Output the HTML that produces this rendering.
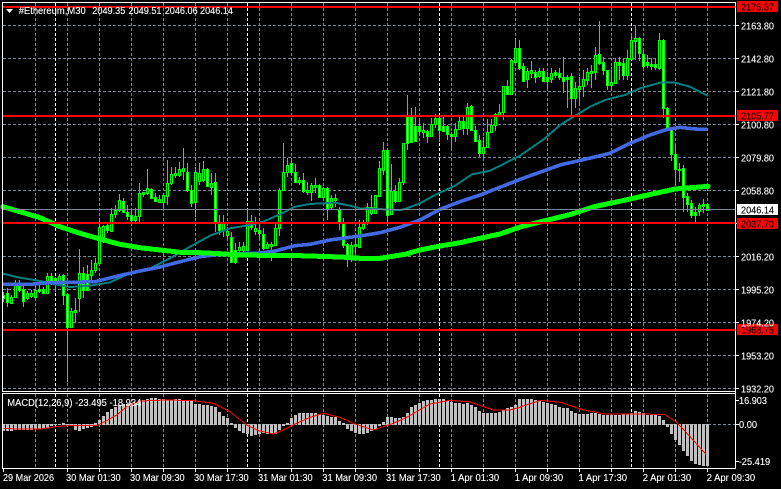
<!DOCTYPE html>
<html><head><meta charset="utf-8"><style>
html,body{margin:0;padding:0;background:#000;width:781px;height:489px;overflow:hidden}
svg{display:block;position:absolute;left:0;top:0}
text{font-family:"Liberation Sans",sans-serif;font-size:10.5px;fill:#fff;stroke:#fff;stroke-width:.12px}
.k{fill:#000;stroke:#000}
</style></head><body>
<svg id="s" xmlns="http://www.w3.org/2000/svg" width="781" height="489" viewBox="0 0 781 489">
<rect width="781" height="489" fill="#000"/>
<g id="grid" shape-rendering="crispEdges"></g>
<g id="hist" shape-rendering="crispEdges"></g>
<g id="cand" shape-rendering="crispEdges"></g>
<g id="ma" fill="none" shape-rendering="crispEdges" stroke-linejoin="round"></g>
<g shape-rendering="crispEdges">
<rect x="3" y="209" width="732" height="1" fill="#778899"/>
<rect x="3" y="6" width="732" height="2" fill="#f00"/>
<rect x="3" y="115" width="732" height="2" fill="#f00"/>
<rect x="3" y="222" width="732" height="2" fill="#f00"/>
<rect x="3" y="329" width="732" height="2" fill="#f00"/>
<rect x="2" y="2" width="734" height="1" fill="#fff"/>
<rect x="2" y="2" width="1" height="389" fill="#fff"/>
<rect x="735" y="2" width="1" height="467" fill="#fff"/>
<rect x="2" y="391" width="734" height="1" fill="#fff"/>
<rect x="2" y="393" width="734" height="1" fill="#fff"/>
<rect x="2" y="393" width="1" height="76" fill="#fff"/>
<rect x="2" y="468" width="734" height="1" fill="#fff"/>
<rect x="737" y="1" width="41" height="11" fill="#f00"/>
<rect x="737" y="110" width="41" height="11" fill="#f00"/>
<rect x="737" y="204" width="41" height="11" fill="#fff"/>
<rect x="737" y="218" width="41" height="11" fill="#f00"/>
<rect x="737" y="324" width="41" height="11" fill="#f00"/>
</g>
<polygon points="6,9 13,9 9.5,13" fill="#fff"/>
<text x="18.7" y="14" textLength="67" lengthAdjust="spacingAndGlyphs">#Ethereum,M30</text>
<text x="92.3" y="14" textLength="33" lengthAdjust="spacingAndGlyphs">2049.35</text>
<text x="128.5" y="14" textLength="33" lengthAdjust="spacingAndGlyphs">2049.51</text>
<text x="164.7" y="14" textLength="33" lengthAdjust="spacingAndGlyphs">2046.06</text>
<text x="200" y="14" textLength="33" lengthAdjust="spacingAndGlyphs">2046.14</text>
<text x="7.3" y="406" textLength="134" lengthAdjust="spacingAndGlyphs">MACD(12,26,9) -23.495 -18.934</text>
<g>
<text x="741" y="29.5" textLength="33" lengthAdjust="spacingAndGlyphs">2163.80</text>
<text x="741" y="62.5" textLength="33" lengthAdjust="spacingAndGlyphs">2142.80</text>
<text x="741" y="95.5" textLength="33" lengthAdjust="spacingAndGlyphs">2121.80</text>
<text x="741" y="128.5" textLength="33" lengthAdjust="spacingAndGlyphs">2100.80</text>
<text x="741" y="161.5" textLength="33" lengthAdjust="spacingAndGlyphs">2079.80</text>
<text x="741" y="194.5" textLength="33" lengthAdjust="spacingAndGlyphs">2058.80</text>
<text x="741" y="260.5" textLength="33" lengthAdjust="spacingAndGlyphs">2016.20</text>
<text x="741" y="293.5" textLength="33" lengthAdjust="spacingAndGlyphs">1995.20</text>
<text x="741" y="326.5" textLength="33" lengthAdjust="spacingAndGlyphs">1974.20</text>
<text x="741" y="359.5" textLength="33" lengthAdjust="spacingAndGlyphs">1953.20</text>
<text x="741" y="392.5" textLength="33" lengthAdjust="spacingAndGlyphs">1932.20</text>
<text class="k" x="741" y="10.5" textLength="33" lengthAdjust="spacingAndGlyphs">2175.37</text>
<text class="k" x="741" y="119.5" textLength="33" lengthAdjust="spacingAndGlyphs">2105.77</text>
<text class="k" x="741" y="213.5" textLength="33" lengthAdjust="spacingAndGlyphs">2046.14</text>
<text class="k" x="741" y="227.5" textLength="33" lengthAdjust="spacingAndGlyphs">2037.70</text>
<text class="k" x="741" y="333.5" textLength="33" lengthAdjust="spacingAndGlyphs">1968.75</text>
<text x="739" y="404" textLength="28" lengthAdjust="spacingAndGlyphs">16.903</text>
<text x="739" y="428" textLength="18" lengthAdjust="spacingAndGlyphs">0.00</text>
<text x="738.7" y="465" textLength="31.5" lengthAdjust="spacingAndGlyphs">-25.419</text>
<text x="3" y="481" textLength="51" lengthAdjust="spacingAndGlyphs">29 Mar 2026</text>
<text x="66" y="481" textLength="54.7" lengthAdjust="spacingAndGlyphs">30 Mar 01:30</text>
<text x="130" y="481" textLength="54.7" lengthAdjust="spacingAndGlyphs">30 Mar 09:30</text>
<text x="194" y="481" textLength="54.7" lengthAdjust="spacingAndGlyphs">30 Mar 17:30</text>
<text x="258" y="481" textLength="54.7" lengthAdjust="spacingAndGlyphs">31 Mar 01:30</text>
<text x="322.3" y="481" textLength="54.7" lengthAdjust="spacingAndGlyphs">31 Mar 09:30</text>
<text x="386" y="481" textLength="54.7" lengthAdjust="spacingAndGlyphs">31 Mar 17:30</text>
<text x="450.7" y="481" textLength="48.5" lengthAdjust="spacingAndGlyphs">1 Apr 01:30</text>
<text x="514.7" y="481" textLength="48.5" lengthAdjust="spacingAndGlyphs">1 Apr 09:30</text>
<text x="578.5" y="481" textLength="48.5" lengthAdjust="spacingAndGlyphs">1 Apr 17:30</text>
<text x="642.7" y="481" textLength="48.5" lengthAdjust="spacingAndGlyphs">2 Apr 01:30</text>
<text x="706.7" y="481" textLength="48.5" lengthAdjust="spacingAndGlyphs">2 Apr 09:30</text>
</g>
</svg>
<script>
(function(){
var NS="http://www.w3.org/2000/svg";
function rect(p,x,y,w,h,c){var r=document.createElementNS(NS,"rect");r.setAttribute("x",x);r.setAttribute("y",y);r.setAttribute("width",w);r.setAttribute("height",h);r.setAttribute("fill",c);p.appendChild(r);}
function line(p,x1,y1,x2,y2,c,d){var l=document.createElementNS(NS,"line");l.setAttribute("x1",x1);l.setAttribute("y1",y1);l.setAttribute("x2",x2);l.setAttribute("y2",y2);l.setAttribute("stroke",c);l.setAttribute("stroke-width",1);if(d)l.setAttribute("stroke-dasharray",d);p.appendChild(l);}
var g=document.getElementById("grid"),i;
var ys=[25,58,91,124,157,190,223,256,289,322,355,388];
for(i=0;i<ys.length;i++){line(g,3,ys[i]+.5,735,ys[i]+.5,"#778899","3 2");rect(g,736,ys[i],3,1,"#fff");}
line(g,3,424.5,735,424.5,"#778899","3 2");rect(g,736,424,3,1,"#fff");rect(g,736,400,3,1,"#fff");rect(g,736,461,3,1,"#fff");
for(var x=35;x<=707;x+=32){line(g,x+.5,3,x+.5,391,"#778899","3 2");line(g,x+.5,394,x+.5,468,"#778899","3 2");if(x>=67)rect(g,x,469,1,3,"#fff");}
rect(g,3,469,1,3,"#fff");
[55,247,439,631].forEach(function(x){line(g,x+.5,3,x+.5,391,"#fff","3 2");line(g,x+.5,394,x+.5,468,"#fff","3 2");});

/* t,b,h,l,fill(1 white) in 3x units */
var c4=[[390,400,380,410,1],[385,410,370,425,1],[397,413,390,418,0],[360,397,345,400,0],[362,375,345,380,1],[373,407,360,425,1],[385,400,378,405,0],[385,392,375,400,0],[375,397,360,398,0],[373,378,360,385,1],[373,383,365,388,1],[333,383,323,385,0],[333,350,325,360,1],[340,350,335,380,1],[333,347,328,360,0],[330,390,328,420,1],[388,485,385,651,1],[438,485,430,490,0],[435,442,400,475,0],[323,400,253,440,0],[325,375,305,400,1],[327,375,300,378,1],[315,330,285,355,0],[295,315,280,325,0],[185,295,160,300,0],[183,215,180,235,0],[180,195,170,205,1],[147,197,130,200,0],[135,147,120,160,0],[105,135,88,140,0],[107,140,100,145,1],[140,152,120,165,1],[150,165,128,170,1],[153,165,130,170,0],[85,152,55,170,0],[82,87,80,95,0],[70,83,12,90,0],[72,98,70,100,1],[97,107,85,112,1],[102,110,90,115,0],[90,110,85,130,0],[53,93,-15,120,0],[27,55,5,60,0],[25,30,5,40,0],[12,30,-9,35,0],[10,17,-51,45,0],[20,75,-6,80,1],[75,113,60,125,1],[20,110,5,155,0],[25,47,-6,60,0],[12,45,-12,50,0],[12,62,10,65,1],[55,65,25,90,0],[52,170,25,200,1],[170,195,150,210,1],[175,195,150,215,0],[197,210,185,225,0],[215,290,200,295,1],[255,290,235,298,1],[245,255,232,268,0],[243,255,232,260,0],[167,255,135,258,0],[167,185,150,195,1],[190,197,155,210,0],[195,205,170,225,1]];
var c5=[[207,248,190,255,1],[238,248,230,250,0],[238,242,232,287,0],[190,240,178,242,0],[75,190,70,213,0],[20,75,-65,78,0],[0,20,-22,35,0],[-5,22,-15,30,1],[22,50,-3,55,1],[46,50,35,60,0],[45,78,25,85,1],[75,82,50,90,0],[60,82,55,108,0],[60,65,40,85,0],[60,95,58,98,1],[70,95,65,98,0],[70,130,65,165,1],[100,125,90,135,0],[100,106,88,125,0],[135,175,125,195,1],[175,240,160,250,1],[238,272,235,305,1],[240,275,230,290,0],[238,243,215,265,0],[187,247,165,250,0],[178,188,165,195,0],[125,172,115,180,0],[125,145,90,150,0],[90,143,90,145,0],[10,92,-12,95,0],[-45,15,-68,30,0],[-45,150,-45,170,1],[78,148,-3,150,0],[78,108,60,115,1],[50,108,40,110,0],[-65,52,-65,60,0]];
var c2=[[350,430,285,450,1],[350,425,323,428,1],[378,422,320,425,1],[378,392,360,405,1],[390,397,370,415,0],[393,407,390,430,1],[372,407,355,410,0],[354,372,343,385,0],[354,390,350,425,1],[378,392,350,395,1],[378,403,375,420,1],[402,408,395,445,1],[387,407,370,425,0],[363,388,350,388,0],[363,383,345,405,1],[322,383,310,405,0],[318,390,315,393,1],[390,423,378,427,1],[420,458,405,472,1],[441,458,410,470,0],[397,442,357,445,0],[375,397,357,400,0],[343,375,340,392,0],[337,345,313,345,0],[258,337,258,360,0],[258,283,240,285,1],[180,283,178,285,0],[145,185,115,185,0],[145,205,120,210,1]];
var c3=[[198,242,190,245,1],[212,238,205,265,0],[210,218,183,235,0],[215,230,210,250,1],[212,228,205,235,0],[212,242,205,245,1],[232,242,215,265,1],[220,237,205,250,0],[216,225,210,235,1],[220,230,205,240,1],[230,242,172,280,1],[232,238,225,325,1],[228,295,220,345,1],[265,295,245,325,0],[258,268,230,315,0],[238,258,210,290,0],[215,240,205,255,0],[213,220,195,265,0],[165,215,140,240,0],[162,190,63,195,1],[187,210,170,225,1],[210,255,210,270,1],[247,255,200,270,0],[187,248,175,250,0],[187,195,170,240,1],[190,225,175,240,1],[175,225,150,240,0],[120,178,100,180,0],[115,122,75,180,0],[115,160,110,183,1],[163,198,150,205,1],[185,195,165,205,1],[193,197,175,210,1],[193,202,175,210,1],[120,205,100,210,0],[120,325,118,355,1],[325,380,320,385,1],[385,463,380,483,1],[462,507,435,555,1],[507,510,489,546,1],[504,591,495,636,1],[588,612,579,636,1],[609,645,600,654,1],[636,645,621,666,1],[615,633,609,648,0],[612,618,597,639,1],[612,630,609,633,1]];
var G="#00ff00",ca=document.getElementById("cand"),n=0;
function seg(base,list){list.forEach(function(d){
 var x=3+4*n,t=Math.round(base+d[0]/3),b=Math.round(base+d[1]/3),h=Math.round(base+d[2]/3),l=Math.round(base+d[3]/3);
 rect(ca,x,h,1,Math.max(l-h,1),G);
 if(b<=t)b=t+1;
 rect(ca,x-1,t,3,b-t+1,G);
 if(b-t>=2)rect(ca,x,t+1,1,b-t-1,d[4]?"#fff":"#000");
 n++;});}
seg(165,c4);seg(165,c5);seg(0,c2);seg(0,c3);

var m=[300,300,300,297,297,297,297,297,295,295,293,290,285,282,281,279,282,285,297,300,295,290,287,280,270,258,247,236,230,225,222,222,220,218,213,210,207,204,204,207,208,210,210,208,208,210,210,213,222,222,225,225,228,232,245,257,265,278,290,300,305,310,315,312,310,307,
310,310,310,298,285,280,265,255,250,250,250,250,250,252,255,258,260,262,272,280,295,300,305,310,310,305,300,295,285,276,262,262,265,265,262,250,232,225,218,212,210,210,208,206,208,212,217,218,218,222,218,225,232,242,248,248,250,250,245,240,235,232,225,208,
207,207,207,210,213,216,218,222,226,230,233,235,242,250,252,252,252,248,250,252,255,255,255,255,255,253,252,250,243,245,250,255,255,256,258,270,288,310,328,342,360,375,390,398,402,404,405];
var hi=document.getElementById("hist");
m.forEach(function(z,k){var x=2+4*k,y=Math.round(330+z/3),z0=424;
 if(y<z0)rect(hi,x,y,3,z0-y+1,"#c0c0c0");else if(y>z0)rect(hi,x,z0,3,y-z0+1,"#c0c0c0");else rect(hi,x,z0,3,1,"#c0c0c0");});

function pl(pts,c,w,cap){var e=document.createElementNS(NS,"polyline");e.setAttribute("points",pts.map(function(p){return p[0]+","+p[1];}).join(" "));e.setAttribute("stroke",c);e.setAttribute("stroke-width",w);if(cap)e.setAttribute("stroke-linecap","round");document.getElementById("ma").appendChild(e);}
pl([[3,273.7],[20,277.7],[40,281],[55,284.3],[70,287],[90,285.7],[110,282.3],[130,273.3],[150,268.3],[170,258.3],[190,246.7],[210,235.7],[230,228.3],[250,225],[263,221.7],[280,214.3],[295,206.7],[310,204],[335,202.7],[350,205.7],[360,208.3],[400,210],[405,209],[420,203.3],[435,195],[455,185.7],[472,174.3],[490,170.7],[503,164.3],[521,155],[545,138.3],[560,125],[590,106.7],[605,100],[625,95],[640,88.3],[660,82.7],[675,82.7],[690,86.7],[708,96]],"#008080",2);
pl([[3,284.3],[30,284.3],[50,282.7],[70,282.3],[95,281.7],[115,276.7],[140,271],[160,267],[180,261.7],[200,256.7],[220,254.3],[260,253],[275,251],[295,245.7],[310,244.3],[330,240],[350,237.3],[360,236],[380,232.7],[400,227.3],[420,220],[440,209.3],[460,201.7],[480,195],[500,187.3],[521,179],[561,164.7],[585,159.3],[610,153.3],[630,143.3],[650,135],[665,130],[680,127.3],[695,129],[707,129.3]],"#4169e1",3.6);
pl([[3,206.7],[20,211.7],[40,217.7],[60,226.7],[80,233.3],[100,239],[120,244.3],[140,247.7],[160,250],[180,252.3],[200,252.7],[220,253.7],[240,255],[260,255.3],[300,255.7],[340,257],[360,258.3],[380,258.3],[390,256.7],[405,254.3],[420,250],[440,246],[460,242.7],[480,238.3],[500,234],[521,226.7],[541,221.7],[571,214.3],[594,206.7],[621,201],[651,194.3],[675,189],[691,187.7],[708,186.3]],"#00ff00",5,true);
var r=[];
[[10,296],[120,297],[170,290],[200,287],[290,287],[320,272],[350,255],[380,230],[420,213],[500,210],[580,212],[640,220],[690,245],[740,285],[778,303]].forEach(function(p){r.push([p[0]/3,330+p[1]/3]);});
[[10,305],[40,312],[70,300],[110,280],[150,262],[190,250],[240,262],[280,280],[340,300],[400,280],[440,262],[510,222],[570,211],[630,216],[700,240],[750,240],[780,232]].forEach(function(p){r.push([260+p[0]/3,330+p[1]/3]);});
[[0,230],[60,211],[120,217],[180,238],[250,252],[430,253],[465,275],[500,312],[555,373]].forEach(function(p){r.push([521+p[0]/3,330+p[1]/3]);});
pl(r,"#ff0000",1);
})();
</script>
</body></html>
